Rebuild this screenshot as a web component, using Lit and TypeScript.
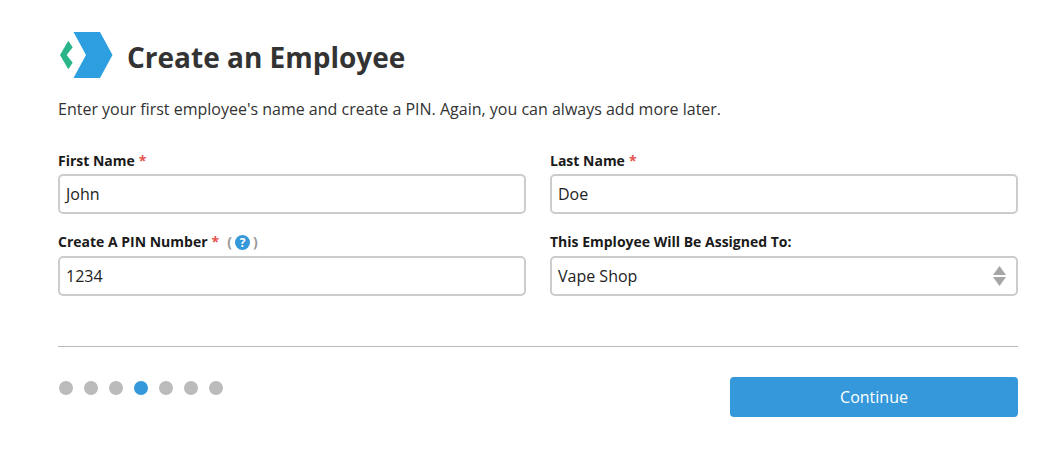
import { LitElement, html, css } from "lit";
import { customElement } from "lit/decorators.js";

@customElement("app-root")
export class AppRoot extends LitElement {
  static styles = css`
    :host { display: block; width: 1040px; height: 462px; background: #fff; font-family: "Open Sans", sans-serif; color: #333; overflow: hidden; }
    .page { padding: 31px 22px 0 58px; display: flex; flex-direction: column; }
    .head { display: flex; align-items: flex-start; gap: 14px; height: 48px; }
    .logo { display: block; flex: none; }
    h1 { margin: 2px 0 0; font-size: 28px; font-weight: 700; line-height: 48px; color: #333; }
    .intro { margin: 18px 0 0; font-size: 16px; line-height: 24px; color: #333; }
    .grid { display: grid; grid-template-columns: 468px 468px; column-gap: 24px; margin-top: 27px; row-gap: 15px; }
    .field { display: flex; flex-direction: column; gap: 2px; }
    .field.low { gap: 3px; }
    label { display: flex; align-items: center; height: 24px; font-size: 14px; font-weight: 700; color: #1a1a1a; }
    .req { color: #e5534b; margin-left: 4px; }
    .paren { color: #999; margin-left: 8px; display: flex; align-items: center; gap: 3px; }
    .help { display: block; margin-top: 2px; }
    .input { box-sizing: border-box; height: 40px; border: 2px solid #ccc; border-radius: 5px; padding: 0 6px; font-size: 16px; color: #222; display: flex; align-items: center; justify-content: space-between; }
    .arrows { display: block; margin-right: 4px; }
    .rule { height: 1px; background: #bbb; margin-top: 50px; }
    .foot { display: flex; justify-content: space-between; align-items: flex-start; margin-top: 30px; }
    .dots { display: flex; gap: 11px; margin-top: 4px; margin-left: 1px; }
    .dot { width: 14px; height: 14px; border-radius: 50%; background: #bbb; }
    .dot.on { background: #3498db; }
    button { width: 288px; height: 40px; border: 0; border-radius: 4px; background: #3498db; color: #fff; font: 400 16px "Open Sans", sans-serif; padding: 0; }
  `;

  render() {
    return html`
      <div class="page">
        <div class="head">
          <svg class="logo" width="55" height="48" viewBox="0 0 55 48">
            <polygon points="2,24 10.3,9.7 14.7,16.3 8.7,24 14.7,31.7 10.3,38.3" fill="#2bb389" />
            <polygon points="15.5,1 42,1 54.5,24 42,47 15.5,47 28,24" fill="#2d9fe0" />
          </svg>
          <h1>Create an Employee</h1>
        </div>
        <p class="intro">Enter your first employee's name and create a PIN. Again, you can always add more later.</p>
        <div class="grid">
          <div class="field">
            <label>First Name<span class="req">*</span></label>
            <div class="input">John</div>
          </div>
          <div class="field">
            <label>Last Name<span class="req">*</span></label>
            <div class="input">Doe</div>
          </div>
          <div class="field low">
            <label>Create A PIN Number<span class="req">*</span><span class="paren"><span>(</span><svg class="help" width="15" height="15" viewBox="0 0 15 15">
                <circle cx="7.5" cy="7.5" r="7.5" fill="#3498db" />
                <text x="7.5" y="12" text-anchor="middle" font-size="12" font-weight="700" fill="#fff" font-family="Open Sans">?</text>
              </svg><span>)</span></span></label>
            <div class="input">1234</div>
          </div>
          <div class="field low">
            <label>This Employee Will Be Assigned To:</label>
            <div class="input">Vape Shop
              <svg class="arrows" width="13" height="20" viewBox="0 0 13 20">
                <polygon points="6.5,0 13,9 0,9" fill="#a6a6a6" />
                <polygon points="0,11 13,11 6.5,20" fill="#a6a6a6" />
              </svg>
            </div>
          </div>
        </div>
        <div class="rule"></div>
        <div class="foot">
          <div class="dots">
            ${[0, 1, 2, 3, 4, 5, 6].map((i) => html`<div class="dot ${i === 3 ? "on" : ""}"></div>`)}
          </div>
          <button>Continue</button>
        </div>
      </div>
    `;
  }
}
